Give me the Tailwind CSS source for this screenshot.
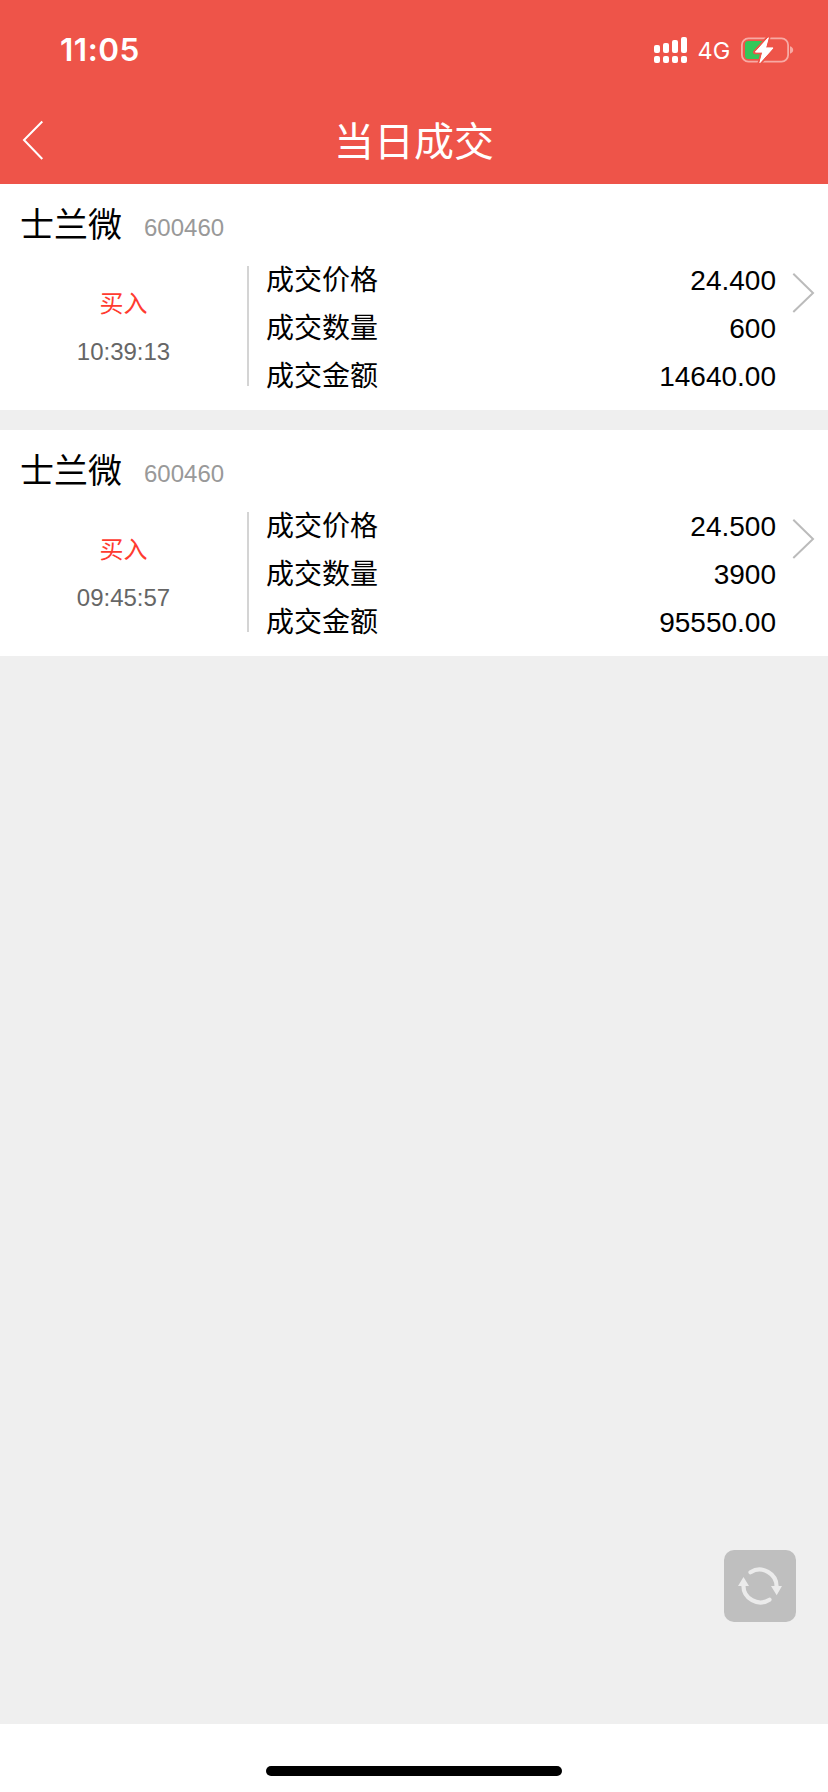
<!DOCTYPE html>
<html lang="zh-CN">
<head>
<meta charset="utf-8">
<title>当日成交</title>
<script src="https://cdn.jsdelivr.net/npm/@tailwindcss/browser@4"></script>
</head>
<body class="w-[828px] h-[1792px] overflow-hidden bg-white text-black font-['Liberation_Sans','Noto_Sans_CJK_SC',sans-serif]">
<div class="flex flex-col h-full relative">
  <header class="h-[184px] bg-[#ee5449] text-white flex flex-col shrink-0">
    <div class="h-[100px] flex items-center justify-between pl-[60px] pr-[34px]">
      <span class="font-['Inter',sans-serif] font-semibold text-[31.5px] leading-[36px] tracking-[0.5px]">11:05</span>
      <div class="flex items-center">
        <svg class="w-[34px] h-[28px]" viewBox="0 0 34 28" fill="#fff">
          <rect x="0" y="9" width="6" height="8" rx="2"/><rect x="9" y="7" width="6" height="10" rx="2"/><rect x="18" y="4" width="6" height="13" rx="2"/><rect x="27" y="1" width="6" height="16" rx="2"/>
          <rect x="0" y="20" width="6" height="7" rx="2"/><rect x="9" y="20" width="6" height="7" rx="2"/><rect x="18" y="20" width="6" height="7" rx="2"/><rect x="27" y="20" width="6" height="7" rx="2"/>
        </svg>
        <span class="font-['Inter',sans-serif] text-[23.5px] leading-[28px] w-[33px] ml-[9px] pt-[2px] pl-[0.5px]">4G</span>
        <svg class="w-[54px] h-[30px] ml-[10px]" viewBox="0 0 54 30">
          <rect x="1.9" y="3.4" width="46.2" height="23.2" rx="6.5" fill="none" stroke="#f7aaa4" stroke-width="1.8"/>
          <path d="M50 11.3c2 .6 3.2 2 3.2 3.7S52 18.1 50 18.7z" fill="#f7aaa4"/>
          <path d="M8 6h18v18H8a3 3 0 0 1-3-3V9a3 3 0 0 1 3-3z" fill="#34c759"/>
          <path d="M28.5 2.2L15 17.2h7.5L19.5 28.2 33.3 12.8h-7.5z" fill="#fff" stroke="#ee5449" stroke-width="4" stroke-linejoin="round" paint-order="stroke"/>
          <path d="M28.3 2.8L15.5 17h7.3L20 27.5 33 13h-7.5z" fill="#fff" stroke="#fff" stroke-width="1" stroke-linejoin="round"/>
        </svg>
      </div>
    </div>
    <div class="h-[84px] grid grid-cols-[100px_1fr_100px] items-center">
      <svg class="w-[24px] h-[44px] ml-[21px] mb-[4px]" viewBox="0 0 24 44" fill="none" stroke="#fff" stroke-width="2"><path d="M21.3 3.5L3 22l18.3 19"/></svg>
      <h1 class="text-center text-[40px] leading-[48px] font-normal">当日成交</h1>
    </div>
  </header>

  <main class="flex-1 bg-[#efefef] flex flex-col gap-[20px]">
    <section class="h-[226px] bg-white">
      <div class="h-[82px] flex items-start pl-[20px] pt-[16px]">
        <h2 class="text-[34px] leading-[50px] w-[124px]">士兰微</h2>
        <span class="text-[24px] leading-[28px] text-[#999] pt-[14px]">600460</span>
      </div>
      <div class="flex h-[120px]">
        <div class="w-[247px] flex flex-col items-center pt-[14px] text-[24px] leading-[48px]">
          <span class="text-[#ff3b30]">买入</span>
          <span class="text-[#666]">10:39:13</span>
        </div>
        <div class="w-[2px] bg-[#d4d4d4]"></div>
        <dl class="w-[527px] pl-[17px] -mt-[9px] text-[28px] leading-[48px]">
          <div class="flex justify-between h-[48px]"><dt>成交价格</dt><dd>24.400</dd></div>
          <div class="flex justify-between h-[48px]"><dt>成交数量</dt><dd>600</dd></div>
          <div class="flex justify-between h-[48px]"><dt>成交金额</dt><dd>14640.00</dd></div>
        </dl>
        <svg class="w-[24px] h-[44px] ml-[15px] mt-[5px]" viewBox="0 0 24 44" fill="none" stroke="#bbb" stroke-width="2"><path d="M2.3 2.8L22 22 2.3 41"/></svg>
      </div>
    </section>
    <section class="h-[226px] bg-white">
      <div class="h-[82px] flex items-start pl-[20px] pt-[16px]">
        <h2 class="text-[34px] leading-[50px] w-[124px]">士兰微</h2>
        <span class="text-[24px] leading-[28px] text-[#999] pt-[14px]">600460</span>
      </div>
      <div class="flex h-[120px]">
        <div class="w-[247px] flex flex-col items-center pt-[14px] text-[24px] leading-[48px]">
          <span class="text-[#ff3b30]">买入</span>
          <span class="text-[#666]">09:45:57</span>
        </div>
        <div class="w-[2px] bg-[#d4d4d4]"></div>
        <dl class="w-[527px] pl-[17px] -mt-[9px] text-[28px] leading-[48px]">
          <div class="flex justify-between h-[48px]"><dt>成交价格</dt><dd>24.500</dd></div>
          <div class="flex justify-between h-[48px]"><dt>成交数量</dt><dd>3900</dd></div>
          <div class="flex justify-between h-[48px]"><dt>成交金额</dt><dd>95550.00</dd></div>
        </dl>
        <svg class="w-[24px] h-[44px] ml-[15px] mt-[5px]" viewBox="0 0 24 44" fill="none" stroke="#bbb" stroke-width="2"><path d="M2.3 2.8L22 22 2.3 41"/></svg>
      </div>
    </section>
  </main>

  <footer class="h-[68px] bg-white flex justify-center items-end pb-[16px] shrink-0">
    <div class="w-[296px] h-[10px] rounded-full bg-black"></div>
  </footer>

  <button class="absolute right-[32px] bottom-[170px] size-[72px] rounded-[10px] bg-[#bfbfbf]" aria-label="刷新">
    <svg class="size-[72px]" viewBox="0 0 72 72" fill="none" stroke="#ebebeb" stroke-width="4.2" stroke-linecap="round">
      <path d="M26.5 22.3A17 17 0 0 1 52.6 37"/>
      <path d="M45.5 49.7A17 17 0 0 1 19.4 35"/>
      <path d="M47 36h11l-5.3 9.3zM14 36h11l-5.5-9z" fill="#ebebeb" stroke="none"/>
    </svg>
  </button>
</div>
</body>
</html>
